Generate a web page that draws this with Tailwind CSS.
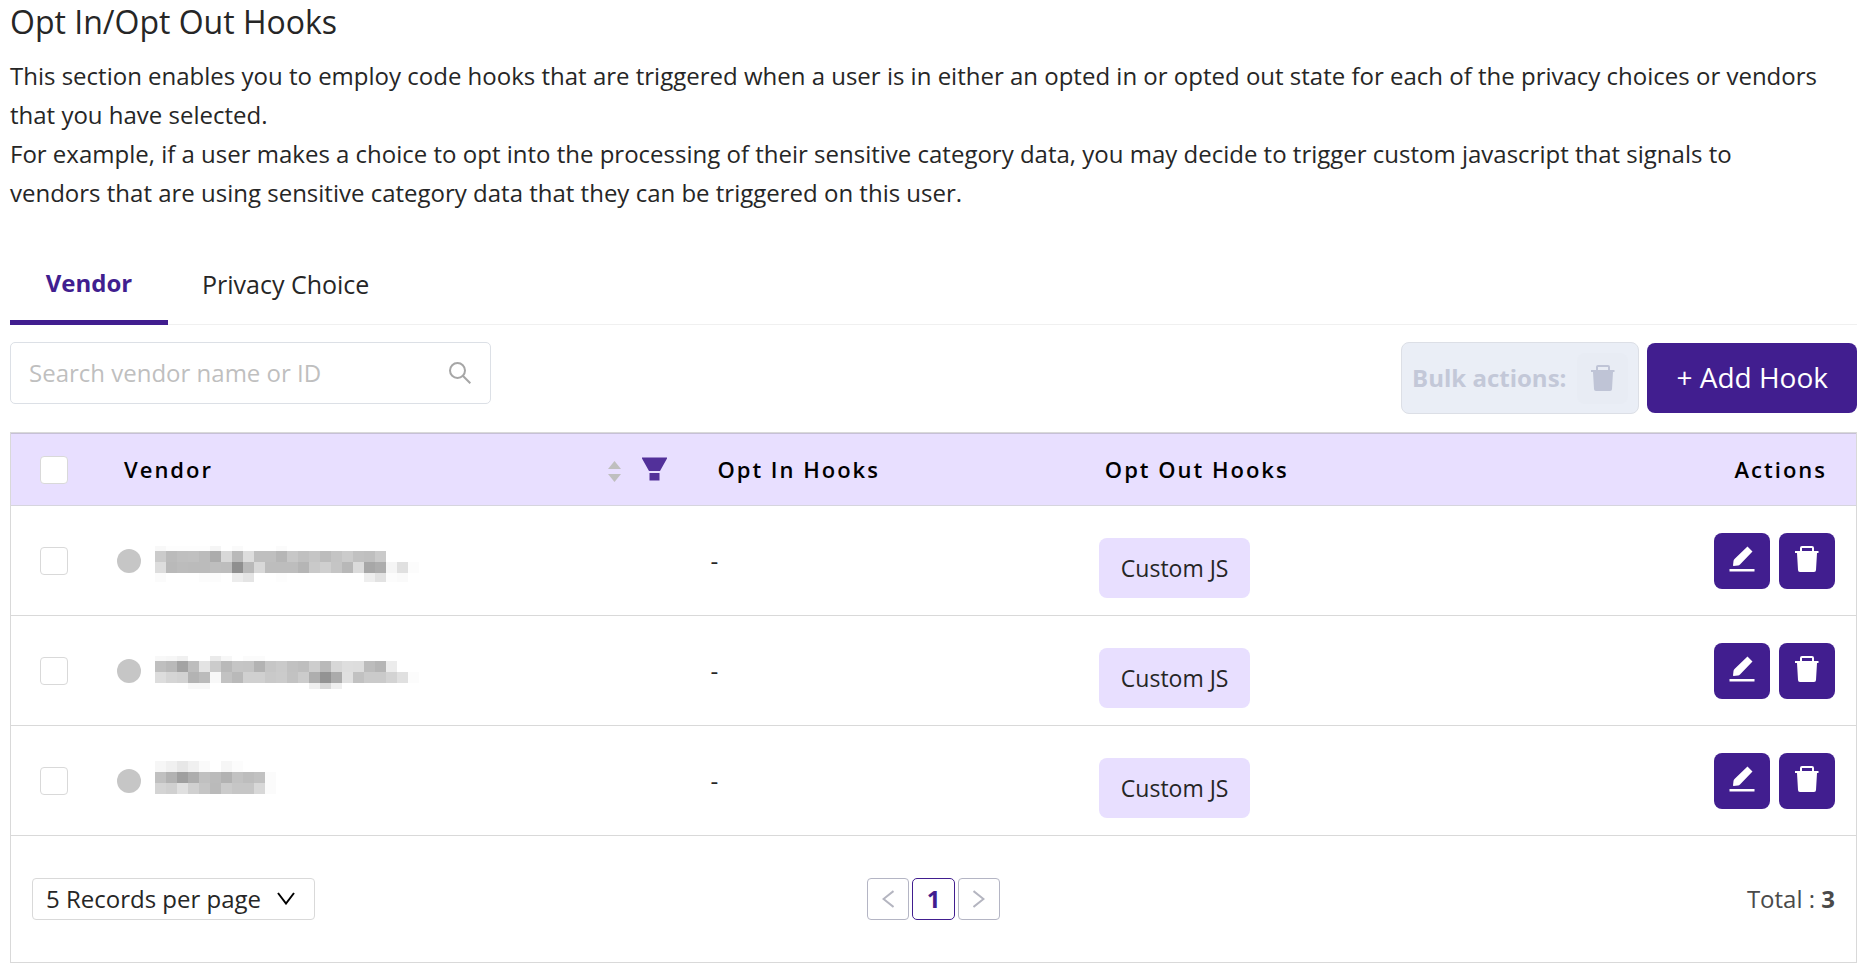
<!DOCTYPE html>
<html lang="en">
<head>
    <meta charset="UTF-8">
    <meta name="viewport" content="width=device-width, initial-scale=1.0">
    <title>Opt In/Opt Out Hooks</title>
    <script src="https://cdn.jsdelivr.net/npm/@tailwindcss/browser@4"></script>
</head>
<body class="bg-white font-['Open_Sans','Noto_Sans',sans-serif] text-2xl text-[#262626]">

    <!-- Shared icons -->
    <svg class="hidden">
        <symbol id="icon-trash" viewBox="0 0 24 26">
            <path fill-rule="evenodd" d="M7 0h10a2 2 0 0 1 2 2v3h4.500v2H22l-1 17a2 2 0 0 1-2 2H5a2 2 0 0 1-2-2L2 7H0V5h5V2a2 2 0 0 1 2-2zm0 2v3h10V2z"/>
        </symbol>
        <symbol id="icon-edit" viewBox="0 0 26 26">
            <path d="M18.500 0.500l5 5L11 18.500c-.6.600-1.200.9-2 1L4.500 20 4 19.500l.5-4.500c.1-.8.400-1.500 1-2.100zM0.500 23h25v2.500h-25z"/>
        </symbol>
    </svg>

    <main class="px-[10px] pb-[7px]">

        <!-- Header -->
        <h1 class="text-[32px] leading-[44px] font-medium">Opt In/Opt Out Hooks</h1>
        <div class="mt-3 leading-[39px]">
            <p>This section enables you to employ code hooks that are triggered when a user is in either an opted in or opted out state for each of the privacy choices or vendors that you have selected.</p>
            <p class="pr-10">For example, if a user makes a choice to opt into the processing of their sensitive category data, you may decide to trigger custom javascript that signals to vendors that are using sensitive category data that they can be triggered on this user.</p>
        </div>

        <!-- Tabs -->
        <div role="tablist" class="mt-[33px] flex h-[80px] items-stretch border-b border-[#f0f0f0]">
            <button role="tab" aria-selected="true" class="-mb-px min-w-[158px] border-b-[5px] border-[#411e8f] px-[34px] font-bold text-[#411e8f]">Vendor</button>
            <button role="tab" aria-selected="false" class="px-[34px] pt-px text-[25px]">Privacy Choice</button>
        </div>

        <!-- Toolbar -->
        <div class="mt-[17px] flex items-start justify-between">
            <label class="flex h-[62px] w-[481px] items-center rounded-[5px] border border-[#dce0e6] pr-[19px] pl-[18px]">
                <input type="text" aria-label="Search vendor name or ID" placeholder="Search vendor name or ID" class="min-w-0 flex-1 outline-none placeholder:text-[#bfbfbf]">
                <svg class="size-[22px]" viewBox="0 0 22 22" fill="none" stroke="#a6a6a6" stroke-width="2">
                    <circle cx="8.500" cy="8.500" r="7.500"/>
                    <path d="M13.800 13.800L21.300 21.300"/>
                </svg>
            </label>
            <div class="flex items-center gap-2">
                <div class="flex h-[72px] items-center gap-[11px] rounded-lg border border-[#dcdfe6] bg-[#eaeef6] px-[10px] font-bold text-[#c3c8d8]">
                    Bulk actions:
                    <button disabled aria-label="Delete selected" class="flex size-[51px] items-center justify-center rounded-lg bg-[#e8ecf4]">
                        <svg class="h-[26px] w-[24px]" fill="#bfc4d6"><use href="#icon-trash"/></svg>
                    </button>
                </div>
                <button class="h-[70px] rounded-lg bg-[#411e8f] px-[29px] text-[28px] text-white">+ Add Hook</button>
            </div>
        </div>

        <!-- Vendor table -->
        <div class="mt-[18px] border border-[#d9d9d9]">
            <table class="w-full table-fixed text-left">
                <colgroup>
                    <col class="w-[84px]">
                    <col class="w-[32%]">
                    <col class="w-[21%]">
                    <col class="w-[21%]">
                    <col>
                </colgroup>
                <thead class="border-t border-b border-t-[#c6c0d6] border-b-[#d6d5de] bg-[#e8dfff] text-[22px] tracking-[2px] text-black">
                    <tr class="h-[72px]">
                        <th class="pl-[29px]">
                            <input type="checkbox" aria-label="Select all" class="block size-7 appearance-none rounded border border-[#d9d9d9] bg-white">
                        </th>
                        <th class="pr-[18px] pl-[29px] font-semibold">
                            <div class="flex items-center">
                                Vendor
                                <button aria-label="Sort by vendor" class="mt-1 ml-auto">
                                    <svg class="h-[21px] w-[13px]" viewBox="0 0 13 21" fill="#bfbfbf"><path d="M6.500 0L13 8H0zM6.500 21L0 13h13z"/></svg>
                                </button>
                                <button aria-label="Filter vendors" class="ml-[21px]">
                                    <svg class="h-[24px] w-[25px]" viewBox="0 0 25 24" fill="#52309a"><path d="M0 0.500h25v1L18 14H7L0 1.500zM7.500 16h10v7.500h-10z"/></svg>
                                </button>
                            </div>
                        </th>
                        <th class="pl-8 font-semibold">Opt In Hooks</th>
                        <th class="pl-8 font-semibold">Opt Out Hooks</th>
                        <th class="pr-[29px] text-right font-semibold">Actions</th>
                    </tr>
                </thead>
                <tbody id="vendorRows"></tbody>
            </table>

            <!-- Footer -->
            <div class="grid h-[126px] grid-cols-3 items-center px-[21px]">
                <div class="relative justify-self-start">
                    <select aria-label="Records per page" class="block h-[42px] appearance-none rounded border border-[#d9d9d9] bg-white pr-[53px] pl-[13px] leading-[38px] [field-sizing:content]">
                        <option>5 Records per page</option>
                        <option>10 Records per page</option>
                    </select>
                    <svg class="pointer-events-none absolute top-[14px] right-[20px] h-[13px] w-[18px]" viewBox="0 0 18 13" fill="none" stroke="#000" stroke-width="2"><path d="M1 1l8 10.500L17 1"/></svg>
                </div>
                <nav aria-label="Pagination" class="flex gap-[3px] justify-self-center">
                    <button aria-label="Previous page" disabled class="flex size-[42px] items-center justify-center rounded border border-[#b4b5c4]">
                        <svg class="h-[18px] w-[12px]" viewBox="0 0 12 18" fill="none" stroke="#b4b5c0" stroke-width="2"><path d="M11.500 1L1.500 9l10 8"/></svg>
                    </button>
                    <button aria-current="page" class="h-[42px] w-[43px] rounded-[5px] border border-[#411e8f] leading-[38px] font-bold text-[#411e8f]">1</button>
                    <button aria-label="Next page" disabled class="flex size-[42px] items-center justify-center rounded border border-[#b4b5c4]">
                        <svg class="h-[18px] w-[12px]" viewBox="0 0 12 18" fill="none" stroke="#b4b5c0" stroke-width="2"><path d="M0.500 1l10 8-10 8"/></svg>
                    </button>
                </nav>
                <p class="justify-self-end text-[#4a4a4a]">Total : <strong>3</strong></p>
            </div>
        </div>
    </main>

    <script>
        // Masked vendor names: each band is [y, height, grey level of every 11px cell]
        const vendors = [
            [
                [1, 5, 'f8 fd fd fd fd f5 ff fa ff ff ff fb'],
                [6, 11, 'cb bb bf c0 bb ac d8 b9 dd bf bf b6 c7 c0 c5 bc c4 cb c1 bf ca'],
                [17, 11, 'dd b9 bc bb bb be bd 8f b9 d8 bd bd bd b5 c9 cf c5 b8 db a7 ad f5 e0 fc'],
                [28, 9, 'fb ff ff ff fc fc ff ec e4 ff ff fd ff ff ff ff ff ff ff ee e2 fc fa']
            ],
            [
                [1, 5, 'f8 f6 f0 ff ff ea f7 ff fb fb'],
                [6, 11, 'bf b9 a3 bd e3 cb b9 c5 c4 b3 c6 ca c1 be cd b9 d7 de dd bc b5 ec'],
                [17, 11, 'dd d5 d2 b3 bb f8 c2 b9 d0 d0 c9 cb c2 cb ae 93 ab e0 c1 ca ca d3 e0 fc'],
                [28, 6, 'ff ff ff f8 f8 ff ff ff ff ff ff ff ff ff f0 d8 ef']
            ],
            [
                [-4, 11, 'f6 f0 e7 f0 fa ff f6 fc'],
                [7, 11, 'c0 b2 9f ad c0 bb b2 c2 bd c1 fb'],
                [18, 11, 'd4 d0 e0 d0 c5 ba cb c6 c6 d8 fb']
            ]
        ];

        function maskedName(bands) {
            return bands.map(([y, h, cells]) => cells.split(' ').map((g, i) =>
                `<rect x="${i * 11}" y="${y}" width="11" height="${h}" fill="#${g}${g}${g}"/>`
            ).join('')).join('');
        }

        document.getElementById('vendorRows').innerHTML = vendors.map((bands, i) => `
            <tr class="h-[110px] border-b border-[#d9d9d9]">
                <td class="pl-[29px]">
                    <input type="checkbox" aria-label="Select vendor ${i + 1}" class="block size-7 appearance-none rounded border border-[#d9d9d9] bg-white">
                </td>
                <td class="pl-[22px]">
                    <div class="flex items-center gap-[14px]">
                        <span class="size-6 rounded-full bg-[#c6c6c6]"></span>
                        <svg class="h-[32px] w-[265px] overflow-visible" viewBox="0 0 265 32" shape-rendering="crispEdges">${maskedName(bands)}</svg>
                    </div>
                </td>
                <td class="pl-[25px]">-</td>
                <td class="pl-[26px]">
                    <span class="mt-[14px] inline-block rounded-lg bg-[#e8dfff] px-[22px] text-[23px] leading-[60px]">Custom JS</span>
                </td>
                <td class="pr-[21px]">
                    <div class="flex justify-end gap-[9px]">
                        <button aria-label="Edit hook" class="flex size-14 items-center justify-center rounded-lg bg-[#411e8f]">
                            <svg class="-mt-1 size-[26px]" fill="#fff"><use href="#icon-edit"/></svg>
                        </button>
                        <button aria-label="Delete hook" class="flex size-14 items-center justify-center rounded-lg bg-[#411e8f]">
                            <svg class="-mt-1 h-[26px] w-[24px]" fill="#fff"><use href="#icon-trash"/></svg>
                        </button>
                    </div>
                </td>
            </tr>
        `).join('');
    </script>

</body>
</html>
